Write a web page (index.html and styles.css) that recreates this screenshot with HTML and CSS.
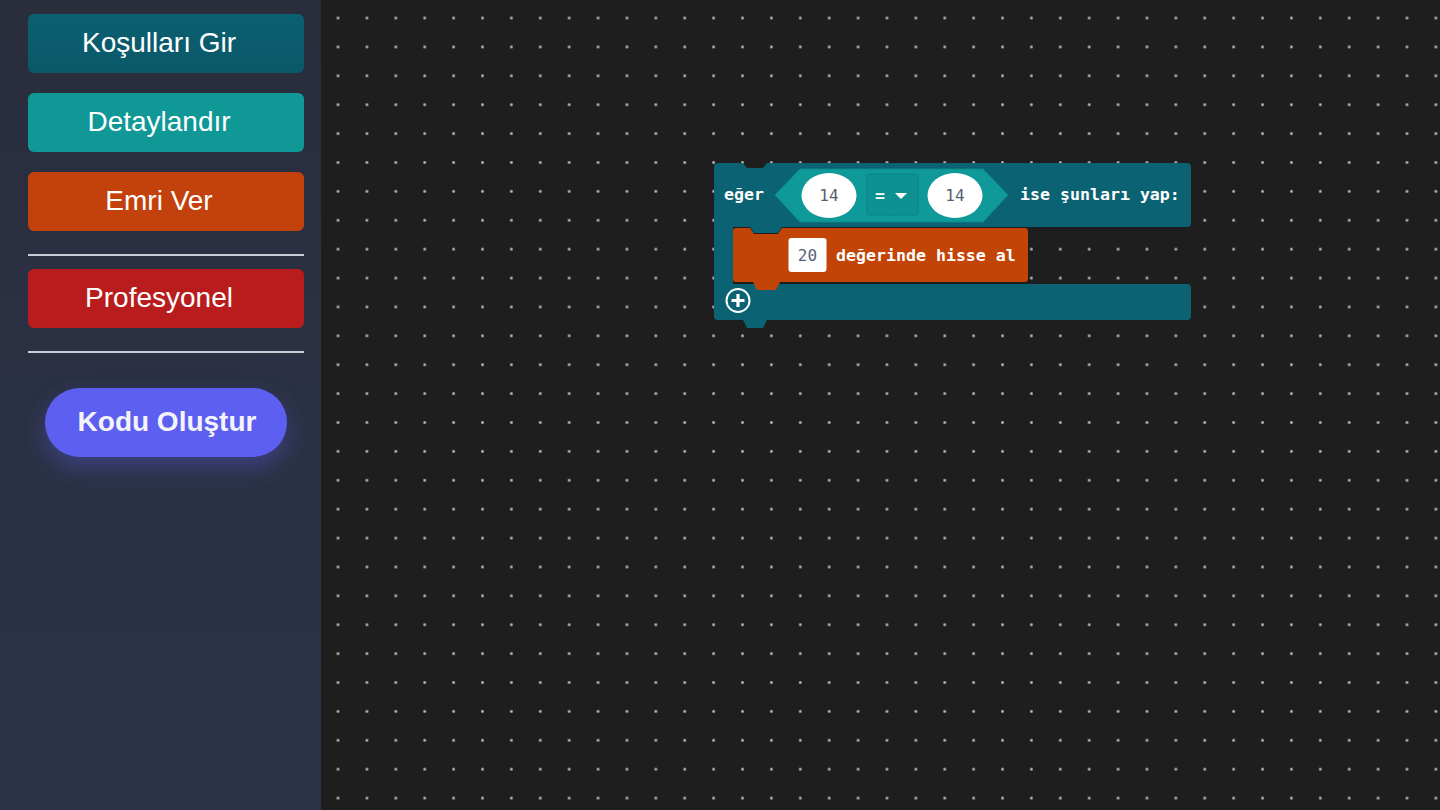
FILE: index.html
```html
<!DOCTYPE html>
<html lang="tr">
<head>
<meta charset="utf-8">
<title>Blok Editörü</title>
<link rel="stylesheet" href="styles.css">
</head>
<body>
<div class="app">
  <aside class="sidebar">
    <button class="cat cat-teal-dark">Koşulları Gir</button>
    <button class="cat cat-teal">Detaylandır</button>
    <button class="cat cat-orange">Emri Ver</button>
    <hr class="sep">
    <button class="cat cat-red">Profesyonel</button>
    <hr class="sep sep-2">
    <button class="generate">Kodu Oluştur</button>
  </aside>
  <main class="workspace">
    <svg class="block" viewBox="704 155 500 180" width="500" height="180">
      <path class="b-if" d="M714,167 Q714,163 718,163 H743 L747,168 H763 L767,163 H1187 Q1191,163 1191,167 V223 Q1191,227 1187,227 H782 L778,233 H754 L750,227 H733 V284 H1187 Q1191,284 1191,288 V316 Q1191,320 1187,320 H767 L763,328 H747 L743,320 H718 Q714,320 714,316 Z"/>
      <polygon class="b-cond" points="775,195 800,169 983,169 1008,195 983,222 800,222"/>
      <ellipse class="b-field" cx="829" cy="195.5" rx="27.5" ry="22.5"/>
      <ellipse class="b-field" cx="955" cy="195.5" rx="27.5" ry="22.5"/>
      <rect class="b-drop" x="867" y="174" width="51" height="41" rx="3"/>
      <text class="b-num" x="829" y="201" text-anchor="middle">14</text>
      <text class="b-num" x="955" y="201" text-anchor="middle">14</text>
      <text class="b-txt" x="875" y="201">=</text>
      <polygon class="b-arrow" points="895,193 907,193 901,199"/>
      <text class="b-txt" x="724" y="200">eğer</text>
      <text class="b-txt" x="1020" y="200">ise şunları yap:</text>
      <path class="b-act" d="M733,231 Q733,228 736,228 H750 L754,234 H778 L782,228 H1025 Q1028,228 1028,231 V279 Q1028,282 1025,282 H780 L776,290 H757 L753,282 H736 Q733,282 733,279 Z"/>
      <rect class="b-box" x="788.5" y="238" width="38" height="34" rx="3"/>
      <text class="b-num" x="807.5" y="261" text-anchor="middle">20</text>
      <text class="b-txt" x="836" y="261">değerinde hisse al</text>
      <circle class="b-plus-ring" cx="738" cy="300.5" r="11.5"/>
      <path class="b-plus" d="M738,294 V307 M731.5,300.5 H744.5"/>
    </svg>
  </main>
</div>
</body>
</html>
```
FILE: styles.css
```css
* { box-sizing: border-box; }
html, body { margin: 0; padding: 0; height: 100%; }
body {
  width: 1440px;
  height: 810px;
  overflow: hidden;
  background: #1e1e1e;
  font-family: "Liberation Sans", Arial, sans-serif;
}
.app {
  display: flex;
  width: 1440px;
  height: 810px;
}
.sidebar {
  width: 321px;
  flex: none;
  background: linear-gradient(180deg, #292d3c 0%, #2b3144 50%, #2c3348 100%);
  padding: 14px 0 0 28px;
  display: flex;
  flex-direction: column;
  align-items: flex-start;
}
.cat {
  width: 276px;
  height: 59px;
  border: none;
  border-radius: 6px;
  color: #ffffff;
  font-family: "Liberation Sans", Arial, sans-serif;
  font-size: 28px;
  padding: 0 14px 2px 0;
  margin: 0 0 20px 0;
  cursor: pointer;
}
.cat-teal-dark { background: linear-gradient(180deg, #0b6071 0%, #0a5868 100%); }
.cat-teal { background: #0f9896; }
.cat-orange { background: #c2410c; margin-bottom: 23px; }
.cat-red { background: #b91c1c; margin-bottom: 23px; }
.sep {
  width: 276px;
  height: 2px;
  border: none;
  margin: 0 0 13px 0;
  background: #c9ced6;
}
.sep-2 { margin-bottom: 35px; }
.generate {
  width: 242px;
  height: 69px;
  margin-left: 17px;
  border: none;
  border-radius: 35px;
  background: #5d5ff0;
  color: #f4f4f8;
  font-family: "Liberation Sans", Arial, sans-serif;
  font-weight: bold;
  font-size: 28px;
  padding: 0 0 2px 2px;
  box-shadow: 0 10px 22px rgba(93, 95, 240, 0.35);
  cursor: pointer;
}
.workspace {
  position: relative;
  flex: 1;
  height: 810px;
  background-color: #1e1e1e;
  background-image: radial-gradient(circle, rgba(220, 220, 220, 0.9) 0, rgba(200, 200, 200, 0.65) 1.2px, rgba(30, 30, 30, 0) 2px);
  background-size: 28.9px 28.9px;
  background-position: 2.6px 3.6px;
}
.block {
  position: absolute;
  left: 383px;
  top: 155px;
  overflow: visible;
}
.b-if { fill: #0b6273; }
.b-cond { fill: #0f9a99; stroke: #0d8a8b; stroke-width: 1; }
.b-field { fill: #ffffff; }
.b-drop { fill: #0e9191; stroke: #0a7a7c; stroke-width: 1; stroke-dasharray: 2 1; }
.b-arrow { fill: #ffffff; }
.b-act { fill: #c24407; }
.b-box { fill: #ffffff; }
.b-num {
  font-family: "DejaVu Sans Mono", monospace;
  font-size: 16px;
  fill: #575e75;
}
.b-txt {
  font-family: "DejaVu Sans Mono", monospace;
  font-size: 16.6px;
  font-weight: bold;
  fill: #ffffff;
}
.b-plus-ring { fill: none; stroke: #ffffff; stroke-width: 2; }
.b-plus { fill: none; stroke: #ffffff; stroke-width: 3.2; }
```
